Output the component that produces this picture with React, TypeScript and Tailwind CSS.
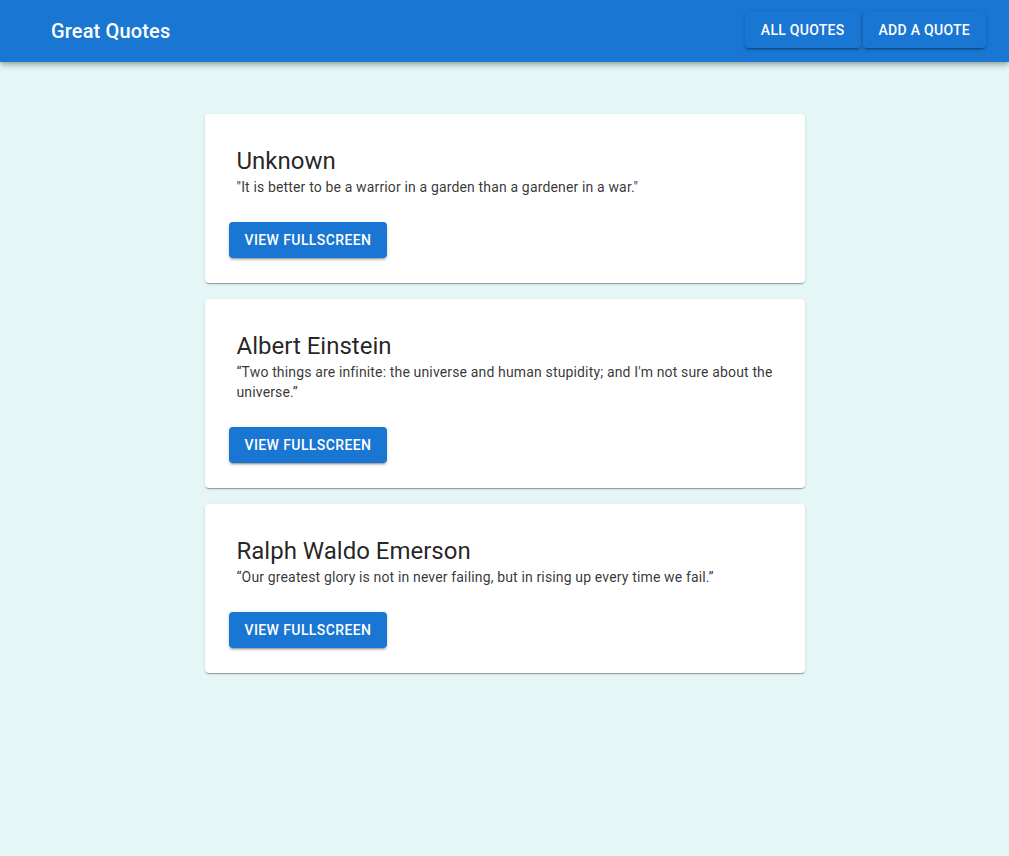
import React from 'react'

const QUOTES = [
  { id: 'q1', author: 'Unknown', text: '"It is better to be a warrior in a garden than a gardener in a war."' },
  { id: 'q2', author: 'Albert Einstein', text: '“Two things are infinite: the universe and human stupidity; and I\'m not sure about the universe.”' },
  { id: 'q3', author: 'Ralph Waldo Emerson', text: '“Our greatest glory is not in never failing, but in rising up every time we fail.”' },
]

const btnShadow =
  'shadow-[0_3px_1px_-2px_rgba(0,0,0,0.2),0_2px_2px_0_rgba(0,0,0,0.14),0_1px_5px_0_rgba(0,0,0,0.12)]'

export default function App() {
  return (
    <div className="min-h-screen bg-[#e4f7f6] font-['Roboto','Liberation_Sans',sans-serif]">
      <header className="h-[62px] bg-[#1976d2] flex items-center justify-between pl-[51px] pr-[23px] shadow-[0_2px_4px_-1px_rgba(0,0,0,0.2),0_4px_5px_0_rgba(0,0,0,0.14),0_1px_10px_0_rgba(0,0,0,0.12)]">
        <h1 className="text-white text-[20px] font-medium tracking-[0.0075em]">Great Quotes</h1>
        <nav className="flex gap-[2px] mb-[2px]">
          <button className={`h-[36px] px-4 rounded bg-[#1976d2] text-white text-[14px] font-medium uppercase tracking-[0.02em] ${btnShadow}`}>
            All Quotes
          </button>
          <button className={`h-[36px] px-4 rounded bg-[#1976d2] text-white text-[14px] font-medium uppercase tracking-[0.02em] ${btnShadow}`}>
            Add a Quote
          </button>
        </nav>
      </header>

      <main className="flex flex-col items-center gap-4 pt-[52px] pb-10">
        {QUOTES.map(q => (
          <div
            key={q.id}
            className="w-[600px] bg-white rounded pt-[31px] pb-[25px] shadow-[0_2px_1px_-1px_rgba(0,0,0,0.2),0_1px_1px_0_rgba(0,0,0,0.14),0_1px_3px_0_rgba(0,0,0,0.12)]"
          >
            <div className="pl-8 pr-6">
              <h2 className="text-[24px] leading-[32px] text-[rgba(0,0,0,0.87)]">{q.author}</h2>
              <p className="text-[14px] leading-[20px] tracking-[0.01071em] text-[rgba(0,0,0,0.8)]">{q.text}</p>
            </div>
            <div className="px-6 mt-[25px]">
              <button className={`h-[36px] px-4 rounded bg-[#1976d2] text-white text-[14px] font-medium uppercase tracking-[0.02857em] ${btnShadow}`}>
                View Fullscreen
              </button>
            </div>
          </div>
        ))}
      </main>
    </div>
  )
}
